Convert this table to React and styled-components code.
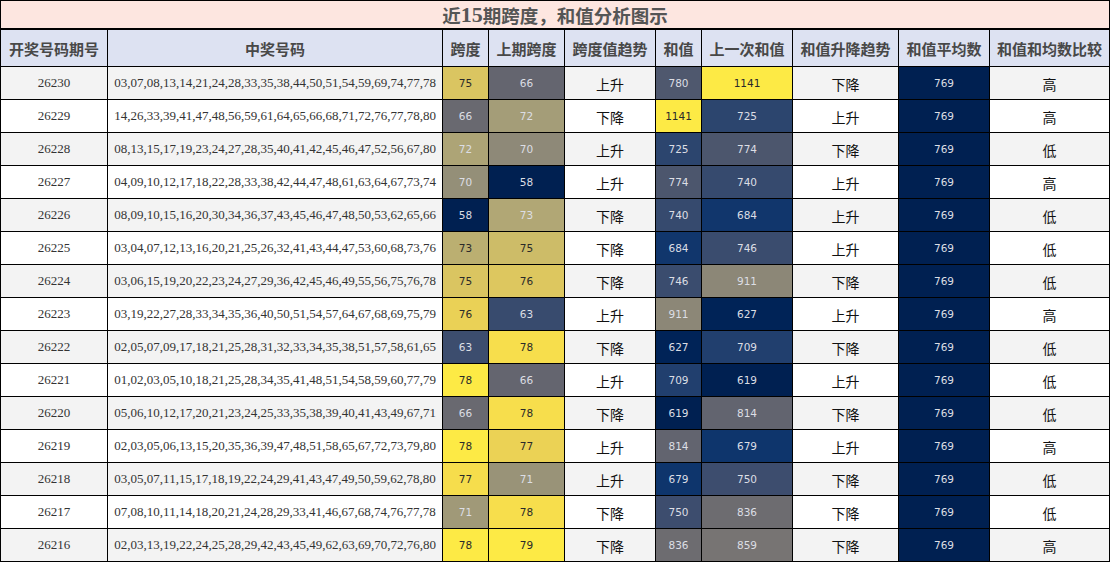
import React from 'react';
import styled, {createGlobalStyle} from 'styled-components';

const GlobalStyle = createGlobalStyle`
  html, body {
    margin: 0;
    padding: 0;
    background: #ffffff;
  }
  body {
    font-family: 'Noto Sans CJK SC', 'Noto Sans', sans-serif;
  }
`;

const COLS = '106px 334px 45px 75px 90px 45px 90px 105px 90px 119px';

const rows = [
  ['26230', '03,07,08,13,14,21,24,28,33,35,38,44,50,51,54,59,69,74,77,78', 75, 66, '上升', 780, 1141, '下降', 769, '高'],
  ['26229', '14,26,33,39,41,47,48,56,59,61,64,65,66,68,71,72,76,77,78,80', 66, 72, '下降', 1141, 725, '上升', 769, '高'],
  ['26228', '08,13,15,17,19,23,24,27,28,35,40,41,42,45,46,47,52,56,67,80', 72, 70, '上升', 725, 774, '下降', 769, '低'],
  ['26227', '04,09,10,12,17,18,22,28,33,38,42,44,47,48,61,63,64,67,73,74', 70, 58, '上升', 774, 740, '上升', 769, '高'],
  ['26226', '08,09,10,15,16,20,30,34,36,37,43,45,46,47,48,50,53,62,65,66', 58, 73, '下降', 740, 684, '上升', 769, '低'],
  ['26225', '03,04,07,12,13,16,20,21,25,26,32,41,43,44,47,53,60,68,73,76', 73, 75, '下降', 684, 746, '上升', 769, '低'],
  ['26224', '03,06,15,19,20,22,23,24,27,29,36,42,45,46,49,55,56,75,76,78', 75, 76, '下降', 746, 911, '下降', 769, '低'],
  ['26223', '03,19,22,27,28,33,34,35,36,40,50,51,54,57,64,67,68,69,75,79', 76, 63, '上升', 911, 627, '上升', 769, '高'],
  ['26222', '02,05,07,09,17,18,21,25,28,31,32,33,34,35,38,51,57,58,61,65', 63, 78, '下降', 627, 709, '下降', 769, '低'],
  ['26221', '01,02,03,05,10,18,21,25,28,34,35,41,48,51,54,58,59,60,77,79', 78, 66, '上升', 709, 619, '上升', 769, '低'],
  ['26220', '05,06,10,12,17,20,21,23,24,25,33,35,38,39,40,41,43,49,67,71', 66, 78, '下降', 619, 814, '下降', 769, '低'],
  ['26219', '02,03,05,06,13,15,20,35,36,39,47,48,51,58,65,67,72,73,79,80', 78, 77, '上升', 814, 679, '上升', 769, '高'],
  ['26218', '03,05,07,11,15,17,18,19,22,24,29,41,43,47,49,50,59,62,78,80', 77, 71, '上升', 679, 750, '下降', 769, '低'],
  ['26217', '07,08,10,11,14,18,20,21,24,28,29,33,41,46,67,68,74,76,77,78', 71, 78, '下降', 750, 836, '下降', 769, '低'],
  ['26216', '02,03,13,19,22,24,25,28,29,42,43,45,49,62,63,69,70,72,76,80', 78, 79, '下降', 836, 859, '下降', 769, '高'],
];

const headers = ['开奖号码期号', '中奖号码', '跨度', '上期跨度', '跨度值趋势', '和值', '上一次和值', '和值升降趋势', '和值平均数', '和值和均数比较'];

// columns that get a colour scale
const SCALED = [2, 3, 5, 6, 8];

const clamp = (v) => Math.max(0, Math.min(255, Math.round(v)));

function cividis(t) {
  t = Math.max(0, Math.min(1, t));
  const r = clamp(-4.54 - t * (35.34 - t * (2381.73 - t * (6402.7 - t * (7024.72 - t * 2710.57)))));
  const g = clamp(32.49 + t * (170.73 + t * (52.82 - t * (131.46 - t * (176.58 - t * 67.37)))));
  const b = clamp(81.24 + t * (442.36 - t * (2482.43 - t * (6167.24 - t * (6614.94 - t * 2475.67)))));
  return `rgb(${r},${g},${b})`;
}

const ranges = {};
SCALED.forEach((c) => {
  const vals = rows.map((r) => r[c]);
  ranges[c] = [Math.min(...vals), Math.max(...vals)];
});

function scaleOf(col, v) {
  const [lo, hi] = ranges[col];
  return hi === lo ? 0 : (v - lo) / (hi - lo);
}

const Board = styled.div`
  width: 1110px;
  display: grid;
  grid-template-columns: ${COLS};
  gap: 1px;
  padding: 1px;
  box-sizing: border-box;
  background: #000000;
`;

const Title = styled.div`
  grid-column: 1 / -1;
  height: 27px;
  margin-bottom: 1px;
  background: #fde6e0;
  color: #555555;
  font-size: 18.5px;
  font-weight: 700;
  display: flex;
  align-items: center;
  justify-content: center;
  white-space: nowrap;
`;

const TitleNum = styled.span`
  font-family: 'Liberation Serif', serif;
  font-size: 22px;
  font-weight: 700;
`;

const Head = styled.div`
  height: 36px;
  background: #dde2f2;
  color: #484848;
  font-size: 15px;
  font-weight: 700;
  display: flex;
  align-items: center;
  justify-content: center;
  white-space: nowrap;
  overflow: hidden;
`;

const Cell = styled.div`
  height: 32px;
  background: ${(p) => (p.$odd ? '#f3f3f3' : '#ffffff')};
  display: flex;
  align-items: center;
  justify-content: center;
  white-space: nowrap;
  overflow: hidden;
`;

const Serif = styled(Cell)`
  font-family: 'Liberation Serif', serif;
  font-size: 13px;
  color: #333333;
`;

const Word = styled(Cell)`
  font-size: 14px;
  color: #111111;
  padding-top: 2px;
  box-sizing: border-box;
`;

const Heat = styled(Cell)`
  font-family: 'DejaVu Sans', 'Verdana', sans-serif;
  font-size: 10.5px;
  color: ${(p) => (p.$dark ? '#2a2a2a' : '#dcdee4')};
`;

function Row({row, odd}) {
  return (
    <>
      {row.map((v, c) => {
        if (SCALED.includes(c)) {
          const t = scaleOf(c, v);
          return (
            <Heat key={c} $odd={odd} $dark={t >= 0.73} style={{background: cividis(t)}}>
              {v}
            </Heat>
          );
        }
        if (c < 2) return <Serif key={c} $odd={odd}>{v}</Serif>;
        return <Word key={c} $odd={odd}>{v}</Word>;
      })}
    </>
  );
}

export default function App() {
  return (
    <>
      <GlobalStyle />
      <Board>
        <Title>
          近<TitleNum>15</TitleNum>期跨度，和值分析图示
        </Title>
        {headers.map((h) => (
          <Head key={h}>{h}</Head>
        ))}
        {rows.map((r, i) => (
          <Row key={r[0]} row={r} odd={i % 2 === 0} />
        ))}
      </Board>
    </>
  );
}
